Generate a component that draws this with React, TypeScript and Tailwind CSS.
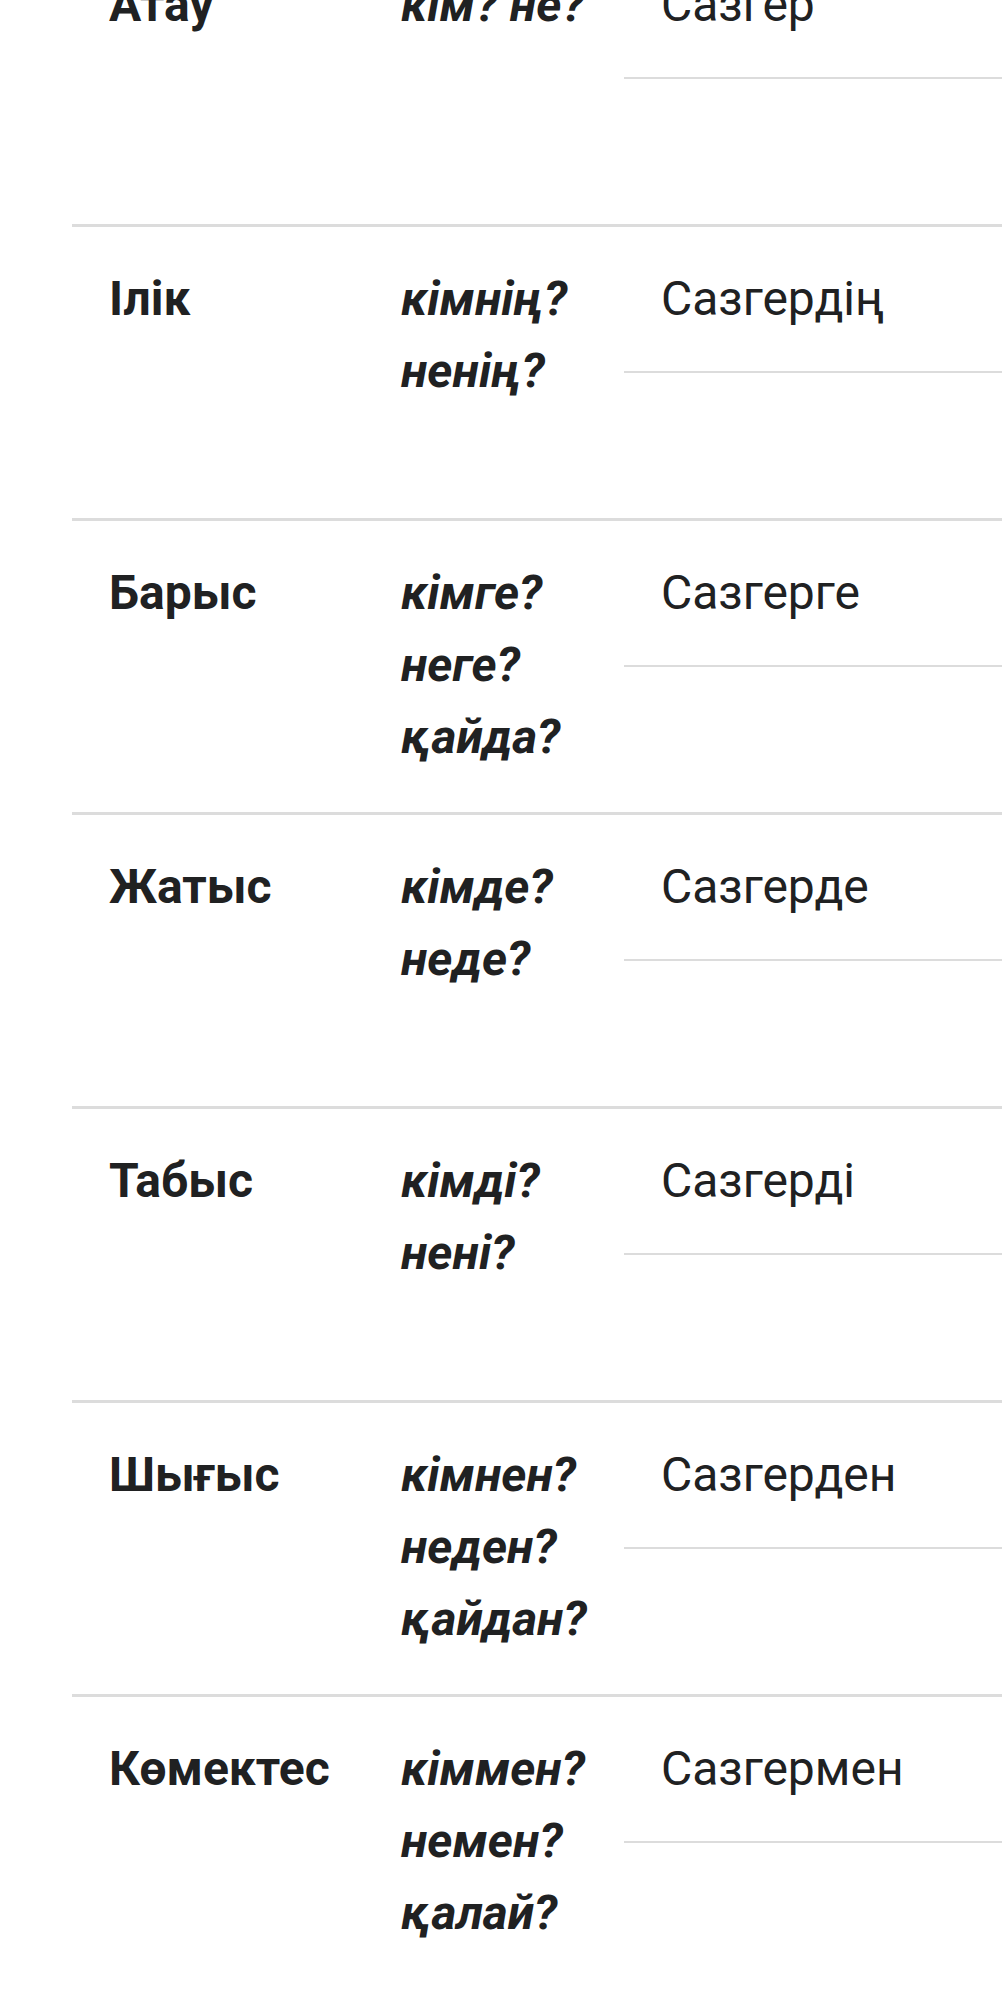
import React from "react";

const rows: { name: string; q: string[]; form: string }[] = [
  { name: "Атау", q: ["кім? не?"], form: "Сазгер" },
  { name: "Ілік", q: ["кімнің?", "ненің?"], form: "Сазгердің" },
  { name: "Барыс", q: ["кімге?", "неге?", "қайда?"], form: "Сазгерге" },
  { name: "Жатыс", q: ["кімде?", "неде?"], form: "Сазгерде" },
  { name: "Табыс", q: ["кімді?", "нені?"], form: "Сазгерді" },
  { name: "Шығыс", q: ["кімнен?", "неден?", "қайдан?"], form: "Сазгерден" },
  { name: "Көмектес", q: ["кіммен?", "немен?", "қалай?"], form: "Сазгермен" },
];

export default function App() {
  return (
    <div
      className="w-[1002px] h-[1990px] overflow-hidden bg-white text-[#202122]"
      style={{ fontFamily: "Roboto, 'Noto Sans', sans-serif" }}
    >
      <div className="-mt-[70px] ml-[72px]">
        {rows.map((r) => (
          <div
            key={r.name}
            className="grid grid-cols-[292px_260px_1fr] h-[294px] border-t-[3px] border-[#dcdcdc] text-[48px] leading-[72px]"
          >
            <div className="pl-[37px] pt-[36px] font-bold">{r.name}</div>
            <div className="pl-[37px] pt-[36px] font-bold italic whitespace-nowrap">
              {r.q.map((l) => (
                <div key={l}>{l}</div>
              ))}
            </div>
            <div>
              <div className="pl-[37px] pt-[36px] pb-[36px] border-b-2 border-[#dcdcdc] whitespace-nowrap">
                {r.form}
              </div>
            </div>
          </div>
        ))}
      </div>
    </div>
  );
}
